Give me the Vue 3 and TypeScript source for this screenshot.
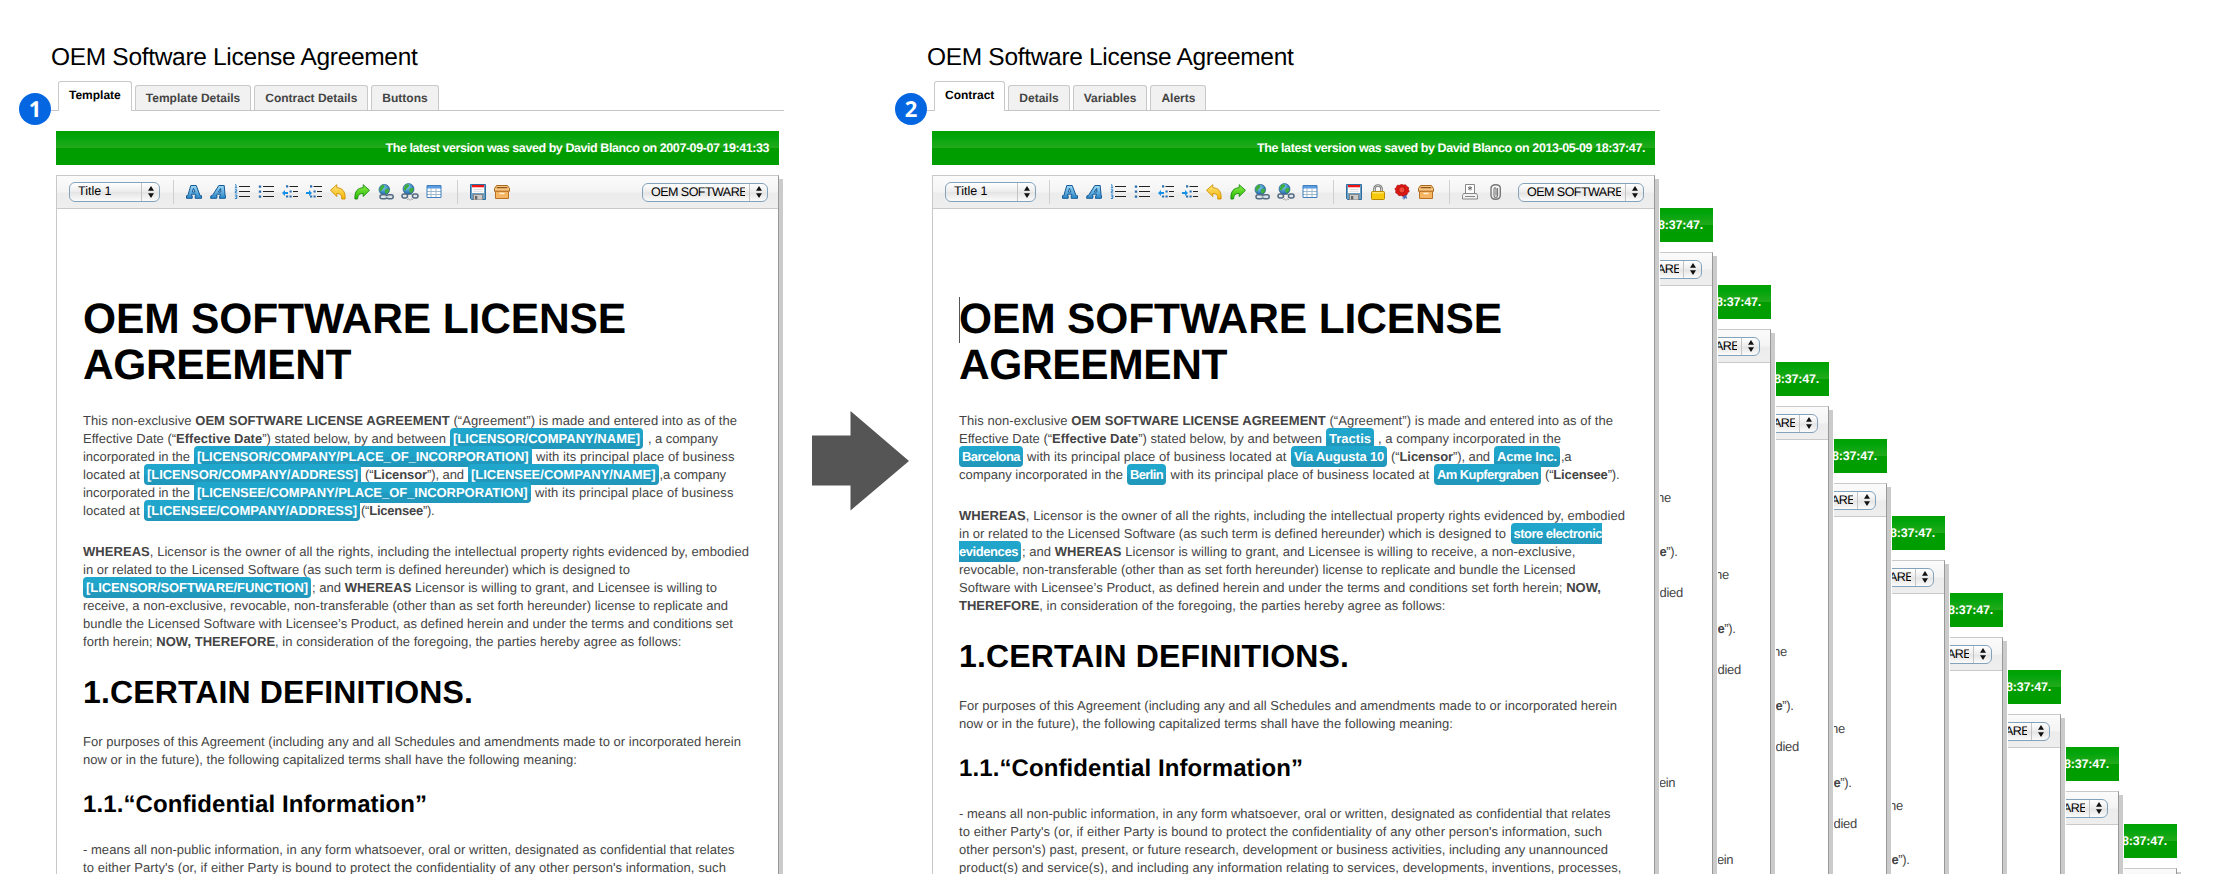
<script setup lang="ts">
import type { Directive } from 'vue'

interface Run { text: string; from: number; to: number; tag?: string }
type Line = Run[]
interface Block { kind: 'h1' | 'h2' | 'h3' | 'p'; lines: Line[] }
interface Sheet {
  id: string
  badge?: string
  tabs: string[]
  saved: string
  savedWidth: number
  file: string
  fileWidth: number
  groups: string[][]
  blocks: Block[]
  depth: number
  caret?: boolean
}

/* Spreads the letters of a run over its measured width. */
const vFit: Directive<HTMLElement, number> = {
  mounted(el, { value }) {
    const text = el.textContent ?? ''
    const natural = el.getBoundingClientRect().width
    el.style.letterSpacing = `${((value - natural) / text.length).toFixed(4)}px`
  }
}

const t = (text: string, to: number, from = 0): Run => ({ text, from, to })
const tag = (text: string, from: number, to: number, shape = 'round'): Run => ({ text, from, to, tag: shape })
const one = (text: string, to: number): Line => [t(text, to)]

const parts = (text: string) =>
  text.split('**').map((s, i) => ({ s, bold: i % 2 === 1 })).filter((p) => p.s)

const gap = (line: Line, i: number) => line[i].from - (i ? line[i - 1].to : 0)

const tail = (extra: Line[]): Block[] => [
  { kind: 'h2', lines: [one('1.CERTAIN DEFINITIONS.', 390)] },
  {
    kind: 'p',
    lines: [
      one('For purposes of this Agreement (including any and all Schedules and amendments made to or incorporated herein', 658),
      one('now or in the future), the following capitalized terms shall have the following meaning:', 494)
    ]
  },
  { kind: 'h3', lines: [one('1.1.“Confidential Information”', 344)] },
  {
    kind: 'p',
    lines: [
      one('- means all non-public information, in any form whatsoever, oral or written, designated as confidential that relates', 651.5),
      one("to either Party's (or, if either Party is bound to protect the confidentiality of any other person's information, such", 643),
      ...extra
    ]
  }
]

const title: Block = {
  kind: 'h1',
  lines: [one('OEM SOFTWARE LICENSE', 543), one('AGREEMENT', 268)]
}
const opening = one('This non-exclusive **OEM SOFTWARE LICENSE AGREEMENT** (“Agreement”) is made and entered into as of the', 654)
const between = t('Effective Date (“**Effective Date**”) stated below, by and between', 363)
const whereas = one('**WHEREAS**, Licensor is the owner of all the rights, including the intellectual property rights evidenced by, embodied', 666)
const related = t('in or related to the Licensed Software (as such term is defined hereunder) which is designed to', 547)

const templateBlocks: Block[] = [
  title,
  {
    kind: 'p',
    lines: [
      opening,
      [between, tag('[LICENSOR/COMPANY/NAME]', 367, 560), t(', a company', 635, 565)],
      [t('incorporated in the', 107), tag('[LICENSOR/COMPANY/PLACE_OF_INCORPORATION]', 111, 448.5), t('with its principal place of business', 651.5, 453)],
      [t('located at', 57), tag('[LICENSOR/COMPANY/ADDRESS]', 61, 278), t('(“**Licensor**”), and', 381, 282), tag('[LICENSEE/COMPANY/NAME]', 385, 575.5), t(',a company', 643, 576.5)],
      [t('incorporated in the', 107), tag('[LICENSEE/COMPANY/PLACE_OF_INCORPORATION]', 111, 447.5), t('with its principal place of business', 650.5, 452)],
      [t('located at', 57), tag('[LICENSEE/COMPANY/ADDRESS]', 61, 277), t('(“**Licensee**”).', 351.5, 278)]
    ]
  },
  {
    kind: 'p',
    lines: [
      whereas,
      [related],
      [tag('[LICENSOR/SOFTWARE/FUNCTION]', 0, 228), t('; and **WHEREAS** Licensor is willing to grant, and Licensee is willing to', 634, 229)],
      one('receive, a non-exclusive, revocable, non-transferable (other than as set forth hereunder) license to replicate and', 645),
      one('bundle the Licensed Software with Licensee’s Product, as defined herein and under the terms and conditions set', 650),
      one('forth herein; **NOW, THEREFORE**, in consideration of the foregoing, the parties hereby agree as follows:', 598.5)
    ]
  },
  ...tail([])
]

const contractBlocks: Block[] = [
  title,
  {
    kind: 'p',
    lines: [
      opening,
      [between, tag('Tractis', 367, 415), t(', a company incorporated in the', 602, 419)],
      [tag('Barcelona', 0, 64), t('with its principal place of business located at', 327.5, 68), tag('Vía Augusta 10', 332, 428), t('(“**Licensor**”), and', 531, 432), tag('Acme Inc.', 535, 601), t(',a', 612, 602)],
      [t('company incorporated in the', 164), tag('Berlin', 168, 207), t('with its principal place of business located at', 470.5, 211.5), tag('Am Kupfergraben', 475, 582), t('(“**Licensee**”).', 660.5, 586)]
    ]
  },
  {
    kind: 'p',
    lines: [
      whereas,
      [related, tag('store electronic', 551.5, 643, 'head')],
      [tag('evidences', 0, 62, 'tail'), t('; and **WHEREAS** Licensor is willing to grant, and Licensee is willing to receive, a non-exclusive,', 616.5, 63)],
      one('revocable, non-transferable (other than as set forth hereunder) license to replicate and bundle the Licensed', 616.5),
      one('Software with Licensee’s Product, as defined herein and under the terms and conditions set forth herein; **NOW,**', 642),
      one('**THEREFORE**, in consideration of the foregoing, the parties hereby agree as follows:', 486.5)
    ]
  },
  ...tail([
    one("other person's) past, present, or future research, development or business activities, including any unannounced", 649),
    one('product(s) and service(s), and including any information relating to services, developments, inventions, processes,', 662.5)
  ])
]

/* A sheet in the stack shows only its right edge, so it carries just the line endings. */
const edgeBlocks = (depth: number): Block[] => {
  if (depth > 5) return []
  const blocks: Block[] = [
    { kind: 'h1', lines: [[], []] },
    { kind: 'p', lines: [[t('he', 654, 640)], [], [], [t('**e**”).', 660.5, 642.5)]] }
  ]
  if (depth < 5) blocks.push({ kind: 'p', lines: [[t('died', 666, 642.5)], [], [], [], [], []] })
  if (depth < 3) blocks.push({ kind: 'h2', lines: [[]] }, { kind: 'p', lines: [[t('ein', 658, 642)]] })
  return blocks
}

const editing = ['bold', 'italic', 'numbers', 'bullets', 'outdent', 'indent', 'undo', 'redo', 'link', 'unlink', 'table']

const sheets: Sheet[] = [
  {
    id: 'template',
    badge: '1',
    tabs: ['Template', 'Template Details', 'Contract Details', 'Buttons'],
    saved: 'The latest version was saved by David Blanco on 2007-09-07 19:41:33',
    savedWidth: 383.5,
    file: 'OEM SOFTWARE',
    fileWidth: 96,
    groups: [editing, ['save', 'archive']],
    blocks: templateBlocks,
    depth: 0
  },
  {
    id: 'contract',
    badge: '2',
    tabs: ['Contract', 'Details', 'Variables', 'Alerts'],
    saved: 'The latest version was saved by David Blanco on 2013-05-09 18:37:47.',
    savedWidth: 388,
    file: 'OEM SOFTWARE',
    fileWidth: 96,
    groups: [editing, ['save', 'lock', 'seal', 'archive'], ['print', 'clip']],
    blocks: contractBlocks,
    depth: 0,
    caret: true
  },
  ...Array.from({ length: 9 }, (_, i) => ({
    id: `edge-${i + 1}`,
    tabs: [],
    saved: '8:37:47.',
    savedWidth: 45,
    file: 'ARE',
    fileWidth: 24,
    groups: [],
    blocks: edgeBlocks(i + 1),
    depth: i + 1
  }))
]

const place = (s: Sheet) =>
  s.depth ? { left: `${1602 + 58 * s.depth}px`, top: `${131 + 77 * s.depth}px` } : undefined
</script>

<template>
  <main class="stage">
    <svg class="defs" width="0" height="0">
      <defs>
        <linearGradient id="gBlue" x1="0" y1="0" x2="0" y2="1"><stop offset="0" stop-color="#9fd8f6" /><stop offset="1" stop-color="#2a86c8" /></linearGradient>
        <linearGradient id="gGold" x1="0" y1="0" x2="0" y2="1"><stop offset="0" stop-color="#ffe680" /><stop offset="1" stop-color="#f5b400" /></linearGradient>
        <linearGradient id="gLeaf" x1="0" y1="0" x2="0" y2="1"><stop offset="0" stop-color="#8df04a" /><stop offset="1" stop-color="#22b800" /></linearGradient>
        <radialGradient id="gGlobe" cx=".4" cy=".3" r=".8"><stop offset="0" stop-color="#7fd0f5" /><stop offset="1" stop-color="#0e4f9c" /></radialGradient>
        <symbol id="i-bold" viewBox="0 0 16 16"><path d="M4.800 1.500h5.400l3.900 10.200h1.400v2.600H9.200v-2.600h.8l-.5-1.500H5.700l-.5 1.500h1v2.600H.5v-2.600h1.300zM7.500 4.400 6.300 8h2.600z" fill="url(#gBlue)" stroke="#145a96" stroke-width="1" fill-rule="evenodd" /></symbol>
        <symbol id="i-italic" viewBox="0 0 16 16"><path d="M8.800 1.500h5.400l.9 10.200h.6l-.4 2.600H9.400l.4-2.600h.6v-1.500H7.100l-.9 1.500h.9l-.4 2.600H.6l.4-2.600h1.300zM10.600 4.500 8.400 8h2.400z" fill="url(#gBlue)" stroke="#145a96" stroke-width="1" fill-rule="evenodd" /></symbol>
        <symbol id="i-numbers" viewBox="0 0 16 16"><path d="M5 2.500h11M5 7.500h11M5 12.500h11" stroke="#222" /><path d="M1 .8h1v3M.8 3.800h2.500M.8 5.800h2v1.500h-1.500v1.700h2M.8 11h2v3.500h-2M1.300 12.700h1.500" fill="none" stroke="#2a80c8" /></symbol>
        <symbol id="i-bullets" viewBox="0 0 16 16"><path d="M5 2.500h11M5 7.500h11M5 12.500h11" stroke="#222" /><path d="M.8 1.400h2.400v2.400H.8zM.8 6.400h2.400v2.400H.8zM.8 11.400h2.400v2.400H.8z" fill="#2c6fae" /></symbol>
        <symbol id="i-outdent" viewBox="0 0 16 16"><path d="M7.500 2.500H16M11 7.500h5M11 12.500h5" stroke="#222" /><path d="M4 1.200h2.200v2.200H4zM7.500 6.400h2.200v2.200H7.500zM7.500 11.400h2.200v2.200H7.500zM4 11.400h2.200v2.200H4z" fill="#2c6fae" /><path d="M0 9l3-3v2h3v2H3v2z" fill="#1490e8" /></symbol>
        <symbol id="i-indent" viewBox="0 0 16 16"><path d="M7.500 2.500H16M11 7.500h5M11 12.500h5" stroke="#222" /><path d="M4 1.200h2.200v2.200H4zM7.500 6.400h2.200v2.200H7.500zM7.500 11.400h2.200v2.200H7.500zM4 11.400h2.200v2.200H4z" fill="#2c6fae" /><path d="M6 9L3 6v2H0v2h3v2z" fill="#1490e8" /></symbol>
        <symbol id="i-undo" viewBox="0 0 16 16"><path d="M.5 6.300 6.800.7v3c5.500.2 8.800 3.500 8.300 11.300h-3.400c.2-4.200-1.200-5.500-4.900-5.500v3z" fill="url(#gGold)" stroke="#d09000" stroke-width=".9" /></symbol>
        <symbol id="i-redo" viewBox="0 0 16 16"><path d="M15.500 6.300 9.200.7v3C3.700 3.900.5 7.200.9 15h2.600c.6-4.200 1.900-5.500 5.700-5.500v3z" fill="url(#gLeaf)" stroke="#1a8a10" stroke-width=".9" /></symbol>
        <symbol id="i-link" viewBox="0 0 16 16"><circle cx="6.300" cy="5.600" r="5.300" fill="url(#gGlobe)" stroke="#1c5a80" stroke-width=".6" /><path d="M2.600 2.300c2-2 4-1.500 4 .3s-2.500 2.200-3 4-2 .2-2.200-1zM7.600 5.300c2-1.500 3.500-.5 3.500 1s-1.500 3.300-2.700 3.500-2.200-3-.8-4.500z" fill="#3fae3c" /><rect x="2" y="10.800" width="7" height="4" rx="2" fill="#dfe6ec" stroke="#526a80" stroke-width="1.500" /><rect x="8.500" y="10.800" width="6.700" height="4" rx="2" fill="#dfe6ec" stroke="#526a80" stroke-width="1.500" /><path d="M6.500 12.800h5" stroke="#c5d2dc" stroke-width="1.200" /></symbol>
        <symbol id="i-unlink" viewBox="0 0 18 18"><circle cx="7.500" cy="6" r="5.500" fill="url(#gGlobe)" stroke="#1c5a80" stroke-width=".6" /><path d="M4 2.500c2-2 4-1.500 4 .3S5.500 5 5 6.800s-2 .2-2.200-1zM9 5.500c2-1.500 3.500-.5 3.500 1S11 9.800 9.800 10 7.600 7 9 5.500z" fill="#3fae3c" /><rect x="1" y="11" width="5.500" height="4" rx="2" fill="#dfe6ec" stroke="#526a80" stroke-width="1.500" /><rect x="11.500" y="11" width="5.500" height="4" rx="2" fill="#dfe6ec" stroke="#526a80" stroke-width="1.500" /><path d="M7 11l.8 1M11 11l-.8 1M9 10.500v1.500M6.500 17l1-1.500M9 17.500V16M11.500 17l-1-1.500" stroke="#777" stroke-width=".8" /></symbol>
        <symbol id="i-table" viewBox="0 0 16 16"><path d="M1 1.500h14v12H1z" fill="#fff" /><path d="M1 1.500h14v3H1z" fill="#5b9ce0" /><path d="M1 7.500h14M1 10.500h14M5 4v9.500M10 4v9.500" stroke="#9fb8cc" /><path d="M1 13.500v-12h14v12z" fill="none" stroke="#3f7fbe" /></symbol>
        <symbol id="i-save" viewBox="0 0 16 16"><path d="M.5.5h15v15h-14l-1-1z" fill="#6d9fc4" stroke="#2f6c9e" /><path d="M2 1h12v8H2z" fill="#fff" /><path d="M2 1h12v2.300H2z" fill="#f01414" /><path d="M3.500 5.500h9M3.500 7.300h9" stroke="#d4d4d4" stroke-width=".8" /><path d="M3.500 10.500h9V16h-9z" fill="#cacaca" stroke="#858585" /><path d="M5 12h2.300v3.500H5z" fill="#666" /></symbol>
        <symbol id="i-lock" viewBox="0 0 16 16"><path d="M4.500 8V4.500c0-4 7-4 7 0V8" fill="none" stroke="#777" stroke-width="2.600" /><path d="M4.500 8V4.500c0-4 7-4 7 0V8" fill="none" stroke="#ccc" stroke-width="1" /><rect x="1.500" y="7.500" width="13" height="8" rx="1" fill="#f7c90c" stroke="#b88a00" /><path d="M2.500 8.800h11" stroke="#fff09a" /></symbol>
        <symbol id="i-seal" viewBox="0 0 16 17"><path d="M8 10l4-1 1.500 7-2-1-1.500 2z" fill="#4d6fb8" /><path d="M9 11l-1 5 1.500-.8" fill="#9db4e4" /><path d="M7.500.3l2.200.8 2.200-.2 1.300 1.700 1.900 1.100-.2 2.200.8 2.100-1.700 1.300-.8 2.200-2.200.1-1.800 1.400-2.200-.8-2.300.2L3.300 10.600 1.300 9.400l.1-2.300L.4 5.100 2 3.500l.9-2.200 2.400.1z" fill="#dd1712" stroke="#9c0808" stroke-width=".6" /><circle cx="7.900" cy="6.300" r="3.300" fill="#f04a3a" stroke="#a80c0c" stroke-width=".8" /></symbol>
        <symbol id="i-archive" viewBox="0 0 16 16"><path d="M2.500 1.500h11l2 3v2.800H.5V4.500z" fill="#f8c683" stroke="#a8671a" /><path d="M3 3h10l.6 1.200H2.400z" fill="#8f5616" /><path d="M1.500 7.300h13v7.200h-13z" fill="#f5b563" stroke="#b87022" /><path d="M5.500 9.500h5" stroke="#fff3d8" stroke-width="1.400" /></symbol>
        <symbol id="i-print" viewBox="0 0 16 16"><path d="M3.500.5h9v9.500h-9z" fill="#fff" stroke="#888" /><path d="M8 2v4.500M6 3.200l4 2.200M10 3.200 6 5.400" stroke="#666" stroke-width=".9" /><path d="M1.500 9.500h13l1 2v3.500H.5v-3.500z" fill="#f2f2f2" stroke="#888" /><path d="M3 12.500h10" stroke="#888" /></symbol>
        <symbol id="i-clip" viewBox="0 0 16 16"><path d="M10.500 4v7.500c0 1.300-.8 2-1.700 2s-1.800-.7-1.800-2V5c0-.9.500-1.300 1-1.300s1 .4 1 1.300v6.500" fill="none" stroke="#777" stroke-width="1.100" /><path d="M4 3.500v7.800c0 2.600 1.900 4 4.600 4s4.700-1.400 4.700-4V4.200C13.300 2 11.700.7 8.800.7S4 2 4 4.500" fill="none" stroke="#777" stroke-width="1.400" /></symbol>
      </defs>
    </svg>

    <template v-for="s in sheets" :key="s.id">
      <section class="sheet" :class="{ edge: s.depth }" :style="place(s)">
        <header v-if="!s.depth" class="head">
          <h4 class="name"><span v-fit="366.5" class="fit">OEM Software License Agreement</span></h4>
          <nav class="tabs">
            <a v-for="(tabName, i) in s.tabs" :key="tabName" class="tab" :class="{ active: i === 0 }">{{ tabName }}</a>
          </nav>
          <span class="badge">{{ s.badge }}</span>
        </header>
        <div class="window">
          <div class="notice"><span v-fit="s.savedWidth" class="fit">{{ s.saved }}</span></div>
          <div class="editor">
            <div class="toolbar">
              <div v-if="!s.depth" class="select style"><span class="value">Title 1</span><span class="knob"><svg width="8" height="12" viewBox="0 0 8 12"><path d="M4 0l3 4.700H1zM4 12l3-4.700H1z" fill="#111" /></svg></span></div>
              <div v-for="(g, gi) in s.groups" :key="gi" class="group" :class="'g' + gi">
                <svg v-for="icon in g" :key="icon" class="icon" :class="icon"><use :href="'#i-' + icon" /></svg>
              </div>
              <div class="select file"><span class="value"><span v-fit="s.fileWidth" class="fit">{{ s.file }}</span></span><span class="knob"><svg width="8" height="12" viewBox="0 0 8 12"><path d="M4 0l3 4.700H1zM4 12l3-4.700H1z" fill="#111" /></svg></span></div>
            </div>
            <article class="page">
              <i v-if="s.caret" class="caret"></i>
              <div v-for="(b, bi) in s.blocks" :key="bi" :class="b.kind">
                <div v-for="(line, li) in b.lines" :key="li" class="line">
                  <span
                    v-for="(r, ri) in line"
                    :key="ri"
                    class="run"
                    :class="r.tag ? ['tag', r.tag] : ''"
                    :style="{ width: r.to - r.from + 'px', marginLeft: gap(line, ri) + 'px' }"
                  ><span v-fit="r.to - r.from - (r.tag ? (r.tag === 'round' ? 6 : 3) : 0)" class="fit"><template v-for="(p, pi) in parts(r.text)" :key="pi"><b v-if="p.bold">{{ p.s }}</b><template v-else>{{ p.s }}</template></template></span></span>
                </div>
              </div>
            </article>
          </div>
        </div>
      </section>
      <svg v-if="s.id === 'template'" class="arrow" width="98" height="100" viewBox="0 0 98 100"><path d="M0 24.500h38.500V0L97 50 38.500 99.500v-25H0z" fill="#555" /></svg>
    </template>
  </main>
</template>

<style>
body {
  margin: 0;
  background: #fff;
}
</style>

<style scoped>
.stage {
  position: relative;
  display: flex;
  width: 2213px;
  height: 874px;
  overflow: hidden;
  background: #fff;
  font-family: "Liberation Sans", Arial, Helvetica, sans-serif;
  font-size: 12px;
  text-rendering: geometricPrecision;
}
.defs {
  position: absolute;
}
.sheet {
  position: relative;
  flex: none;
  box-sizing: border-box;
  width: 784px;
  padding-left: 56px;
}
.arrow {
  flex: none;
  width: 98px;
  margin: 411px -34px 0 28px;
}
.head {
  height: 131px;
  margin-left: -5px;
}
.name {
  margin: 0;
  padding-top: 41px;
  height: 40px;
  line-height: 33px;
  font-size: 24.500px;
  font-weight: 400;
  color: #000;
}
.fit {
  display: inline-block;
  white-space: pre;
}
.tabs {
  display: flex;
  align-items: flex-end;
  gap: 3px;
  box-sizing: border-box;
  height: 30px;
  padding-left: 7px;
  border-bottom: 1px solid #c6c6c6;
}
.tab {
  box-sizing: border-box;
  height: 25px;
  padding: 0 10px;
  border: 1px solid #c9c9c9;
  border-bottom: 0;
  border-radius: 3px 3px 0 0;
  background: #f1f1f1;
  color: #444;
  font-weight: 700;
  line-height: 24px;
  white-space: nowrap;
}
.tab.active {
  height: 30px;
  margin-bottom: -1px;
  line-height: 27px;
  background: #fff;
  color: #000;
}
.badge {
  position: absolute;
  left: 19px;
  top: 93px;
  width: 32px;
  height: 32px;
  border-radius: 50%;
  background: #0566e2;
  color: #fff;
  font: 700 22px/33px "Open Sans", sans-serif;
  text-align: center;
}
.window {
  width: 723px;
}
.notice {
  box-sizing: border-box;
  height: 34px;
  padding-right: 10px;
  background: linear-gradient(#00a000, #00a40a 15%, #22aa1c 49%, #009c00 51%, #009e00);
  color: #fff;
  font-size: 12.500px;
  font-weight: 700;
  line-height: 35px;
  text-align: right;
}
.editor {
  box-sizing: border-box;
  height: 720px;
  margin-top: 10px;
  border: 1px solid #c9c9c9;
  border-right-color: #999;
  box-shadow: 4px 4px 0 #cbcbcb;
  background: #fff;
}
.toolbar {
  display: flex;
  align-items: center;
  box-sizing: border-box;
  height: 33px;
  padding: 0 10px 0 12px;
  border-bottom: 1px solid #c9c9c9;
  background: linear-gradient(#fbfbfb, #f4f4f4 50%, #ececec 53%, #eee);
}
.select {
  display: flex;
  box-sizing: border-box;
  border: 1px solid #83a3bd;
  border-radius: 6px;
  background: linear-gradient(#fff, #ececec 48%, #e4e4e4 52%, #fbfbfb);
  color: #000;
  overflow: hidden;
}
.select .value {
  flex: 1;
  overflow: hidden;
  white-space: nowrap;
}
.knob {
  display: flex;
  align-items: center;
  justify-content: center;
  border-left: 1px solid #c4c4c4;
}
.select.style {
  width: 91px;
  height: 20px;
  font-size: 12.500px;
  line-height: 17px;
}
.style .value {
  padding-left: 8px;
}
.style .knob {
  width: 17px;
}
.select.file {
  width: 126px;
  height: 19px;
  margin-left: auto;
  font-size: 12.500px;
  line-height: 16px;
}
.file .value {
  margin: 0 4px 0 8px;
}
.edge .file .value {
  margin-left: 80px;
}
.file .knob {
  width: 17px;
}
.group {
  display: flex;
  align-items: center;
  gap: 8px;
  height: 24px;
  margin-left: 13px;
  padding-left: 12px;
  border-left: 1px solid #d0d0d0;
}
.g1,
.g2 {
  margin-left: 15px;
}
.icon {
  width: 16px;
  height: 16px;
}
.icon.unlink {
  width: 18px;
  height: 18px;
  margin: 0 -1px;
}
.icon.clip {
  margin-left: 1px;
}
.page {
  position: relative;
  padding: 88px 0 0 26px;
  color: #444;
}
.caret {
  position: absolute;
  left: 26px;
  top: 88px;
  width: 1px;
  height: 46px;
  background: #555;
}
.line {
  display: flex;
  height: 18px;
}
.p {
  font-size: 13px;
  line-height: 17px;
}
.run {
  position: relative;
  flex: none;
  box-sizing: border-box;
  white-space: nowrap;
}
.p + .p {
  margin-top: 23px;
}
.h1,
.h2,
.h3 {
  color: #000;
  font-weight: 700;
}
.h1 {
  margin-bottom: 23px;
  font-size: 42.500px;
}
.h1 .line {
  height: 46px;
  line-height: 46px;
}
.h2 {
  margin: 22px 0;
  font-size: 32px;
}
.h2 .line {
  height: 38px;
  line-height: 38px;
}
.h3 {
  margin: 21px 0;
  font-size: 24px;
}
.h3 .line {
  height: 30px;
  line-height: 30px;
}
.tag {
  height: 21px;
  margin-top: -2px;
  padding: 2px 3px 0;
  border-radius: 4px;
  background: linear-gradient(#20a6cc, #20a4ca 48%, #209bbf 54%, #2097ba);
  color: #fff;
  font-weight: 700;
}
.tag.head {
  padding-right: 0;
  border-radius: 4px 0 0 4px;
}
.tag.tail {
  padding-left: 0;
  border-radius: 0 4px 4px 0;
}
.edge {
  position: absolute;
  bottom: 0;
  width: 58px;
  padding-left: 0;
  overflow: hidden;
}
.edge .window {
  margin-left: -670px;
}
</style>
